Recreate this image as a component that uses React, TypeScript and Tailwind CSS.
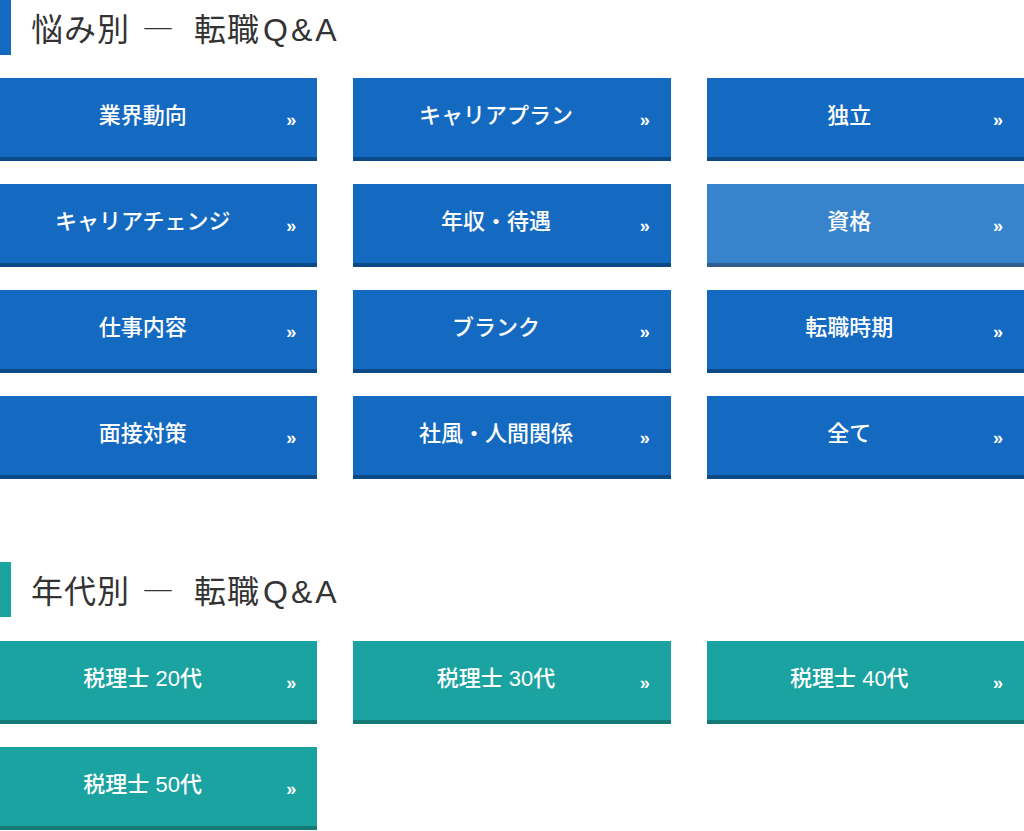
import React from "react";

const font = { fontFamily: '"Liberation Sans", "Noto Sans CJK JP", sans-serif' };
const cjk = { fontFamily: '"Noto Sans CJK JP", sans-serif' };

type Btn = { label: string; hover?: boolean };

const worries: Btn[] = [
  { label: "業界動向" },
  { label: "キャリアプラン" },
  { label: "独立" },
  { label: "キャリアチェンジ" },
  { label: "年収・待遇" },
  { label: "資格", hover: true },
  { label: "仕事内容" },
  { label: "ブランク" },
  { label: "転職時期" },
  { label: "面接対策" },
  { label: "社風・人間関係" },
  { label: "全て" },
];

const ages: Btn[] = [
  { label: "税理士 20代" },
  { label: "税理士 30代" },
  { label: "税理士 40代" },
  { label: "税理士 50代" },
];

function Heading({ pre, teal }: { pre: string; teal?: boolean }) {
  return (
    <div className="flex items-center h-[55px]">
      <div className={`w-[11px] h-full ${teal ? "bg-[#1ba39f]" : "bg-[#1469c1]"}`} />
      <h2
        className="ml-[20px] text-[32px] leading-none text-[#333333] font-normal tracking-[1px] pt-[2px] whitespace-nowrap"
        style={font}
      >
        <span>{pre}</span>
        <span className="inline-block ml-[12px] mr-[20px] tracking-normal" style={cjk}>―</span>
        <span>転職</span>
        <span className="ml-[3px] tracking-[3px]">Q&amp;A</span>
      </h2>
    </div>
  );
}

function Button({ b, teal }: { b: Btn; teal?: boolean }) {
  const cls = teal
    ? "bg-[#1aa3a0] border-[#147a76]"
    : b.hover
    ? "bg-[#3884cc] border-[#2f5e8e]"
    : "bg-[#1469c1] border-[#0c4a86]";
  return (
    <a className={`relative flex items-center justify-center h-[83px] border-b-4 pr-[32px] pb-[3px] ${cls}`}>
      <span className="text-white text-[22px] font-medium leading-none" style={font}>
        {b.label}
      </span>
      <span className="absolute right-[21px] top-[33px] text-white text-[18px] font-bold leading-none" style={font}>
        »
      </span>
    </a>
  );
}

export default function App() {
  return (
    <div className="w-[1024px] h-[831px] bg-white overflow-hidden">
      <Heading pre="悩み別" />
      <div className="grid grid-cols-3 gap-x-[36px] gap-y-[23px] mt-[23px]">
        {worries.map((b) => (
          <Button key={b.label} b={b} />
        ))}
      </div>
      <div className="mt-[83px]">
        <Heading pre="年代別" teal />
      </div>
      <div className="grid grid-cols-3 gap-x-[36px] gap-y-[23px] mt-[24px]">
        {ages.map((b) => (
          <Button key={b.label} b={b} teal />
        ))}
      </div>
    </div>
  );
}
